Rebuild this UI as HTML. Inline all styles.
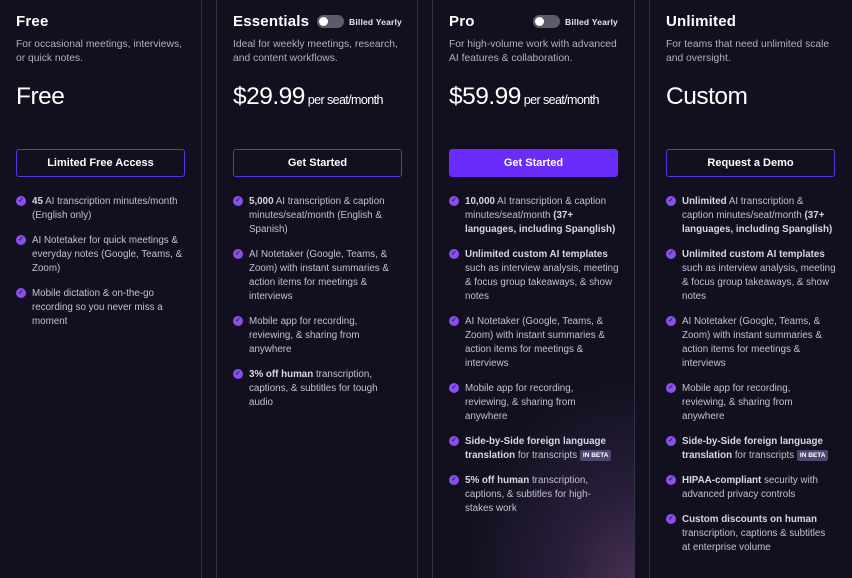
<!DOCTYPE html>
<html><head><meta charset="utf-8"><style>
*{box-sizing:border-box;margin:0;padding:0}
body{width:852px;height:565px;background:#12101f;font-family:"Liberation Sans",sans-serif;color:#c8c5d3;overflow:hidden;position:relative}
.card{position:absolute;top:-2px;height:580px;padding:12px 16px 0 16px;border-left:1px solid #34324a;border-right:1px solid #34324a}
.c1{left:-1px;width:203px}
.c2{left:216px;width:202px}
.c3{left:432px;width:203px;background:radial-gradient(ellipse 170px 200px at 100% 100%,#45304f 0%,#271d38 45%,rgba(18,16,31,0) 100%)}
.c4{left:649px;width:210px;border-right:none}
h2{font-size:15px;font-weight:bold;color:#fff;height:18px;margin-top:3px;letter-spacing:.2px;position:relative}
.tog{position:absolute;right:0;top:2px;font-size:8.5px;color:#e8e6f0;display:flex;align-items:center;gap:5px}
.c2 .tog{right:-1px}
.sw{width:27px;height:13px;border-radius:7px;background:#5d5a6b;position:relative}
.sw:after{content:"";position:absolute;left:2px;top:2px;width:9px;height:9px;border-radius:50%;background:#fff}
.desc{font-size:10.3px;line-height:14px;margin-top:7px;color:#b3b0c0;height:28px}
.price{margin-top:17px;font-size:24.5px;color:#fff;height:28px;letter-spacing:-.5px}
.price small{font-size:12.5px;letter-spacing:-.6px}
.btn{position:absolute;top:151px;left:16px;width:169px;height:28px;border:1px solid #5b33e0;border-radius:3px;font-size:11px;font-weight:bold;color:#fff;text-align:center;line-height:26px}
.fill{background:#6a2cfb;border-color:#6a2cfb}
ul{position:absolute;top:197px;left:16px;width:170px;list-style:none}
li{position:relative;padding-left:16px;font-size:9.8px;line-height:14px;margin-bottom:11px;color:#c4c1cf}
li b{color:#d8d6e2}
li:before{content:"✓";position:absolute;left:0;top:1px;width:10px;height:10px;border-radius:50%;background:#8b4ff0;color:#2a1a50;font-size:6.5px;line-height:10px;text-align:center;font-weight:bold}
.beta{display:inline-block;background:#504771;color:#fff;font-size:6.5px;font-weight:bold;padding:0 3px;border-radius:2px;line-height:11px;vertical-align:1px}
</style></head><body>
<div class="card c1"><h2>Free</h2><div class="desc">For occasional meetings, interviews, or quick notes.</div><div class="price">Free</div>
<div class="btn">Limited Free Access</div>
<ul><li><b>45</b> AI transcription minutes/month (English only)</li><li>AI Notetaker for quick meetings &amp; everyday notes (Google, Teams, &amp; Zoom)</li><li>Mobile dictation &amp; on-the-go recording so you never miss a moment</li></ul></div>
<div class="card c2"><h2>Essentials<span class="tog"><span class="sw"></span>Billed Yearly</span></h2><div class="desc">Ideal for weekly meetings, research, and content workflows.</div><div class="price">$29.99<small> per seat/month</small></div>
<div class="btn">Get Started</div>
<ul><li><b>5,000</b> AI transcription &amp; caption minutes/seat/month (English &amp; Spanish)</li><li>AI Notetaker (Google, Teams, &amp; Zoom) with instant summaries &amp; action items for meetings &amp; interviews</li><li>Mobile app for recording, reviewing, &amp; sharing from anywhere</li><li><b>3% off human</b> transcription, captions, &amp; subtitles for tough audio</li></ul></div>
<div class="card c3"><h2>Pro<span class="tog"><span class="sw"></span>Billed Yearly</span></h2><div class="desc">For high-volume work with advanced AI features &amp; collaboration.</div><div class="price">$59.99<small> per seat/month</small></div>
<div class="btn fill">Get Started</div>
<ul><li><b>10,000</b> AI transcription &amp; caption minutes/seat/month <b>(37+ languages, including Spanglish)</b></li><li><b>Unlimited custom AI templates</b> such as interview analysis, meeting &amp; focus group takeaways, &amp; show notes</li><li>AI Notetaker (Google, Teams, &amp; Zoom) with instant summaries &amp; action items for meetings &amp; interviews</li><li>Mobile app for recording, reviewing, &amp; sharing from anywhere</li><li><b>Side-by-Side foreign language translation</b> for transcripts <span class="beta">IN BETA</span></li><li><b>5% off human</b> transcription, captions, &amp; subtitles for high-stakes work</li></ul></div>
<div class="card c4"><h2>Unlimited</h2><div class="desc">For teams that need unlimited scale and oversight.</div><div class="price">Custom</div>
<div class="btn">Request a Demo</div>
<ul><li><b>Unlimited</b> AI transcription &amp; caption minutes/seat/month <b>(37+ languages, including Spanglish)</b></li><li><b>Unlimited custom AI templates</b> such as interview analysis, meeting &amp; focus group takeaways, &amp; show notes</li><li>AI Notetaker (Google, Teams, &amp; Zoom) with instant summaries &amp; action items for meetings &amp; interviews</li><li>Mobile app for recording, reviewing, &amp; sharing from anywhere</li><li><b>Side-by-Side foreign language translation</b> for transcripts <span class="beta">IN BETA</span></li><li><b>HIPAA-compliant</b> security with advanced privacy controls</li><li><b>Custom discounts on human</b> transcription, captions &amp; subtitles at enterprise volume</li></ul></div>
</body></html>
